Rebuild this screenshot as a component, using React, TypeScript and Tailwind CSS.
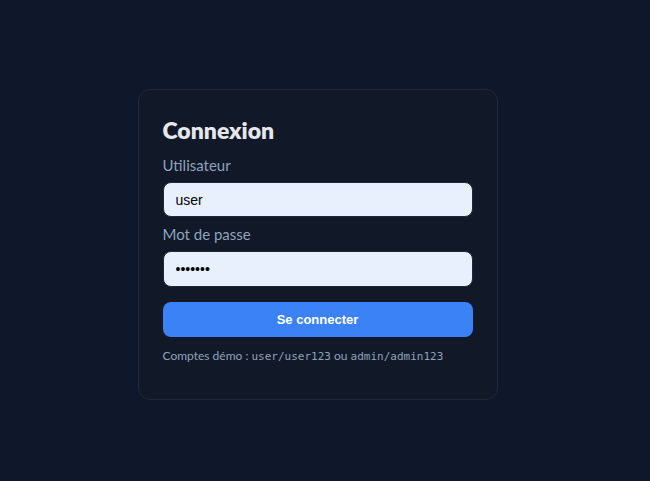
import React from 'react';

const App: React.FC = () => {
    return (
        <div className="min-h-screen bg-[#0f172a] pt-[89px]" style={{ fontFamily: 'Lato, "Noto Sans", sans-serif' }}>
            <div className="w-[635px] flex justify-center">
                <div className="w-[360px] h-[311px] bg-[#111827] border border-[#1e293b] rounded-xl px-6 pt-6">
                    <h1 className="text-[23px] leading-[32px] font-extrabold text-[#e5e7eb]">Connexion</h1>
                    <form className="mt-[9px]" onSubmit={(e) => e.preventDefault()}>
                        <label className="block text-[15px] leading-5 text-[#8ea3bd]">Utilisateur</label>
                        <input
                            type="text"
                            defaultValue="user"
                            className="mt-[7px] block w-full h-[35px] px-3 rounded-lg bg-[#e8f0fe] border border-[#1f2937] text-black text-[14px] outline-none"
                            style={{ fontFamily: '"Liberation Sans", Arial, sans-serif' }}
                        />
                        <label className="mt-[7px] block text-[15px] leading-5 text-[#8ea3bd]">Mot de passe</label>
                        <input
                            type="password"
                            defaultValue="user123"
                            className="mt-[7px] block w-full h-9 px-3 rounded-lg bg-[#e8f0fe] border border-[#1f2937] text-black text-[14px] outline-none"
                            style={{ fontFamily: '"Liberation Sans", Arial, sans-serif' }}
                        />
                        <button
                            type="submit"
                            className="mt-[15px] block w-full h-[35px] rounded-lg bg-[#3b82f6] text-white text-[13px] font-bold"
                            style={{ fontFamily: '"Liberation Sans", Arial, sans-serif' }}
                        >
                            Se connecter
                        </button>
                    </form>
                    <p className="mt-[9px] text-[12px] leading-5 text-[#8ea3bd]">
                        Comptes démo : <code className="text-[11px]" style={{ fontFamily: '"DejaVu Sans Mono", monospace' }}>user/user123</code> ou{' '}
                        <code className="text-[11px]" style={{ fontFamily: '"DejaVu Sans Mono", monospace' }}>admin/admin123</code>
                    </p>
                </div>
            </div>
        </div>
    );
};

export default App;
